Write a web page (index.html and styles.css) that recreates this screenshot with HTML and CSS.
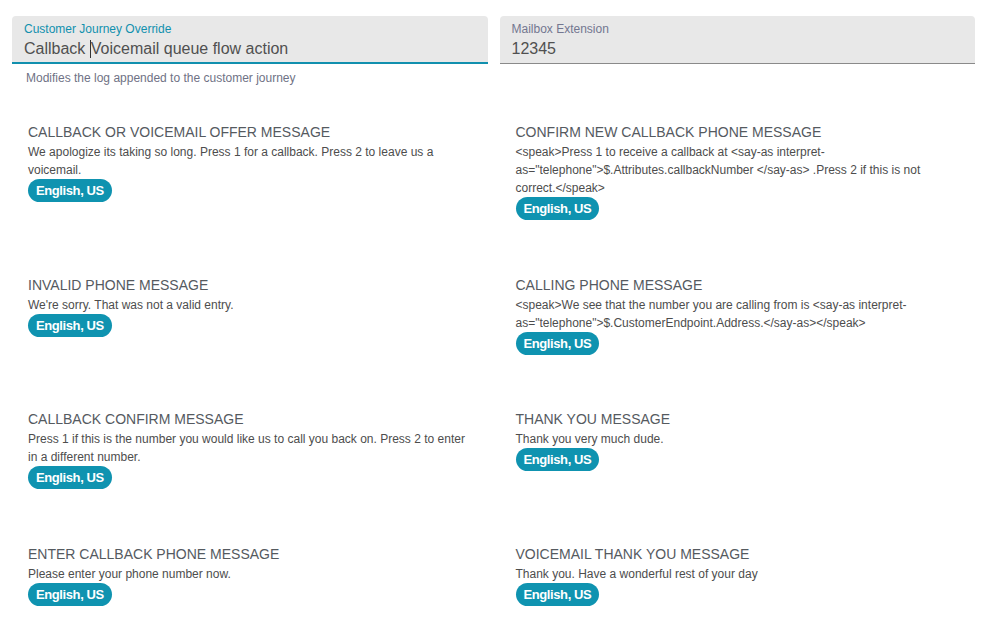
FILE: index.html
```html
<!DOCTYPE html>
<html lang="en">
<head>
    <meta charset="UTF-8">
    <meta name="viewport" content="width=device-width, initial-scale=1.0">
    <title>Callback Voicemail Queue Flow</title>
    <link rel="stylesheet" href="styles.css">
</head>
<body>
    <div class="page">
        <div class="fields">
            <div>
                <div class="field field-active">
                    <label class="field-label">Customer Journey Override</label>
                    <div class="field-value">Callback <span class="caret"></span>Voicemail queue flow action</div>
                </div>
                <p class="helper">Modifies the log appended to the customer journey</p>
            </div>
            <div>
                <div class="field">
                    <label class="field-label">Mailbox Extension</label>
                    <div class="field-value">12345</div>
                </div>
            </div>
        </div>

        <div class="messages">
            <div class="message">
                <h4>CALLBACK OR VOICEMAIL OFFER MESSAGE</h4>
                <p>We apologize its taking so long. Press 1 for a callback. Press 2 to leave us a voicemail.</p>
                <span class="lang">English, US</span>
            </div>
            <div class="message">
                <h4>CONFIRM NEW CALLBACK PHONE MESSAGE</h4>
                <p>&lt;speak&gt;Press 1 to receive a callback at &lt;say-as interpret-as="telephone"&gt;$.Attributes.callbackNumber &lt;/say-as&gt; .Press 2 if this is not correct.&lt;/speak&gt;</p>
                <span class="lang">English, US</span>
            </div>
            <div class="message">
                <h4>INVALID PHONE MESSAGE</h4>
                <p>We're sorry. That was not a valid entry.</p>
                <span class="lang">English, US</span>
            </div>
            <div class="message">
                <h4>CALLING PHONE MESSAGE</h4>
                <p>&lt;speak&gt;We see that the number you are calling from is &lt;say-as interpret-as="telephone"&gt;$.CustomerEndpoint.Address.&lt;/say-as&gt;&lt;/speak&gt;</p>
                <span class="lang">English, US</span>
            </div>
            <div class="message">
                <h4>CALLBACK CONFIRM MESSAGE</h4>
                <p>Press 1 if this is the number you would like us to call you back on. Press 2 to enter in a different number.</p>
                <span class="lang">English, US</span>
            </div>
            <div class="message">
                <h4>THANK YOU MESSAGE</h4>
                <p>Thank you very much dude.</p>
                <span class="lang">English, US</span>
            </div>
            <div class="message">
                <h4>ENTER CALLBACK PHONE MESSAGE</h4>
                <p>Please enter your phone number now.</p>
                <span class="lang">English, US</span>
            </div>
            <div class="message">
                <h4>VOICEMAIL THANK YOU MESSAGE</h4>
                <p>Thank you. Have a wonderful rest of your day</p>
                <span class="lang">English, US</span>
            </div>
        </div>
    </div>
</body>
</html>
```

FILE: styles.css
```css
body {
    margin: 0;
    font-family: 'Liberation Sans', Arial, sans-serif;
    color: #4d4d4d;
    background: #fff;
}

.page {
    padding: 16px 19px 0 12px;
}

.fields {
    display: grid;
    grid-template-columns: 1fr 1fr;
    column-gap: 12px;
}

.field {
    background: #e8e8e8;
    border-radius: 4px 4px 0 0;
    padding: 6px 12px 4px;
    border-bottom: 1px solid #8a8a8a;
}

.field-active {
    padding-bottom: 3px;
    border-bottom: 2px solid #1190ae;
}

.field-label {
    display: block;
    font-size: 12px;
    line-height: 14px;
    color: #737790;
}

.field-active .field-label {
    color: #1190ae;
}

.field-value {
    margin-top: 3px;
    font-size: 16px;
    line-height: 20px;
    color: #505050;
}

/* text cursor inside the focused input */
.caret {
    display: inline-block;
    width: 0;
    height: 18px;
    border-left: 1px solid #333;
    vertical-align: -4px;
}

.helper {
    margin: 7px 0 0;
    padding-left: 14px;
    font-size: 12px;
    line-height: 14px;
    color: #6f7285;
}

.messages {
    margin-top: 38px;
    display: grid;
    grid-template-columns: 1fr 1fr;
    column-gap: 12px;
}

.message {
    display: flex;
    flex-direction: column;
    align-items: flex-start;
    padding: 0 16px 55.5px;
}

.message h4 {
    margin: 0;
    font-size: 14px;
    line-height: 18px;
    font-weight: normal;
    color: #555a5f;
}

.message p {
    margin: 2px 0 0;
    font-size: 12px;
    line-height: 18px;
    color: #4d4d4d;
}

.lang {
    display: inline-block;
    height: 23px;
    line-height: 23px;
    padding: 0 8px;
    border-radius: 12px;
    background: #0f93b0;
    color: #fff;
    font-size: 13px;
    font-weight: bold;
    letter-spacing: -0.4px;
}
```
